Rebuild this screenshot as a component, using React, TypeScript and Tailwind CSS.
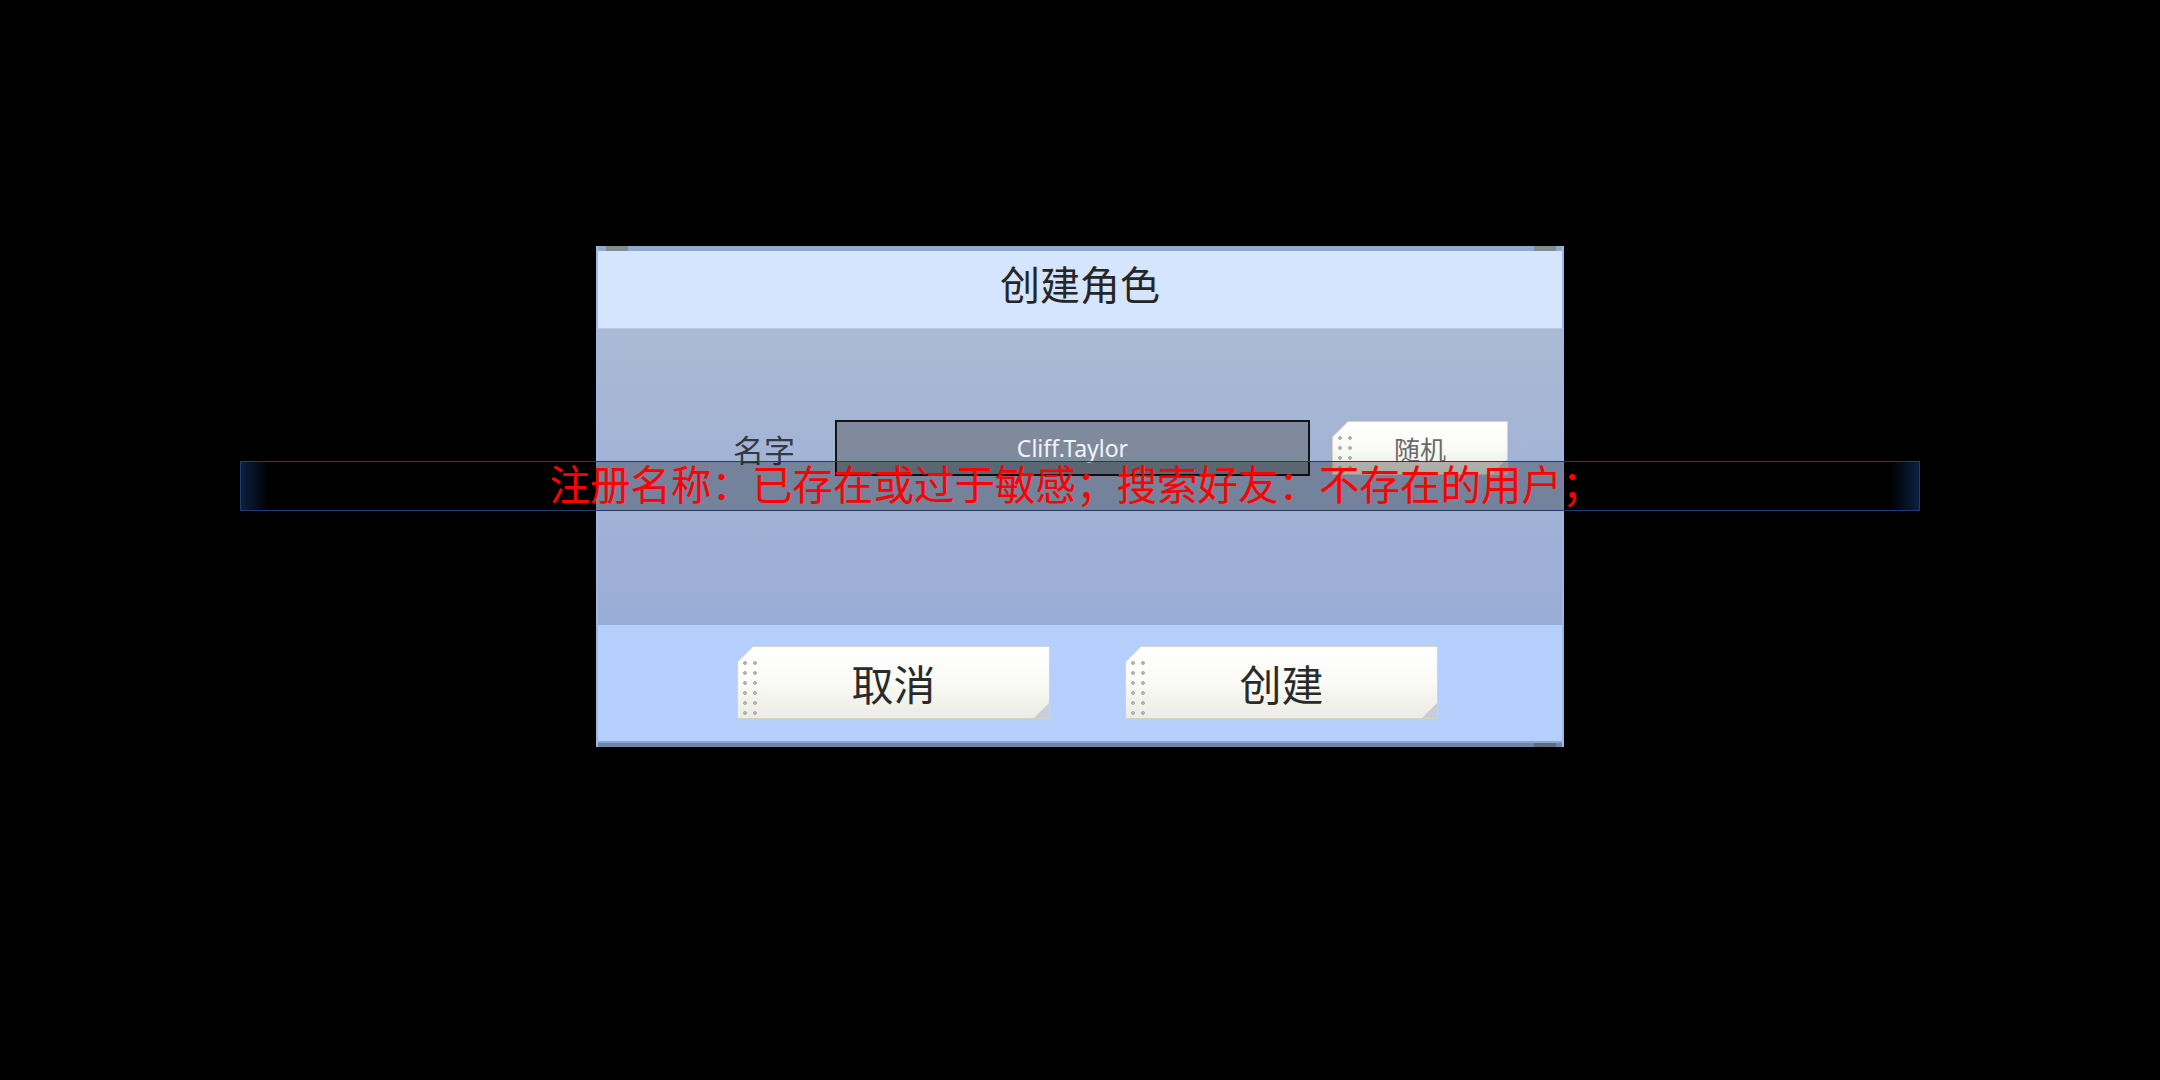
import React from 'react';

const CJK = '"Noto Sans CJK SC", "Noto Sans", sans-serif';

function PaperButton({ label, className, textClass }: { label: string; className: string; textClass: string }) {
  return (
    <div className={`relative ${className}`}>
      {/* frame */}
      <div className="absolute inset-0 bg-[#d6d3c4] [clip-path:polygon(16px_0,100%_0,100%_100%,0_100%,0_16px)]" />
      {/* face */}
      <div className="absolute inset-[1px] bg-gradient-to-b from-[#ffffff] via-[#fafaf6] to-[#ecece4] [clip-path:polygon(15px_0,100%_0,100%_100%,0_100%,0_15px)]" />
      {/* dotted strip */}
      <div className="absolute left-[3px] top-[12px] bottom-[3px] w-[20px] bg-[radial-gradient(circle,#b3b3ad_1.6px,transparent_2.2px)] bg-[length:10px_10px]" />
      {/* corner fold */}
      <div className="absolute right-[1px] bottom-[1px] w-[15px] h-[15px] bg-[#c9cdd9] [clip-path:polygon(100%_0,100%_100%,0_100%)]" />
      <span className={`relative flex h-full items-center justify-center ${textClass}`} style={{ fontFamily: CJK }}>
        {label}
      </span>
    </div>
  );
}

export default function App() {
  return (
    <div className="relative w-[2160px] h-[1080px] bg-black overflow-hidden">
      <div className="flex justify-center pt-[246px]">
        {/* dialog */}
        <div className="relative w-[968px] flex flex-col border-x-2 border-[#9db8e6]">
          {/* top rim */}
          <div className="relative h-[5px] bg-[#8ea9d2]">
            <div className="absolute left-[8px] top-0 w-[22px] h-[5px] bg-[#7d908e]" />
            <div className="absolute right-[6px] top-0 w-[22px] h-[5px] bg-[#7d908e]" />
          </div>

          {/* title */}
          <div className="h-[78px] bg-[#d5e5fd] flex items-center justify-center pb-[14px] border-b border-[#b9c8e0]">
            <span className="text-[40px] leading-none text-[#262626]" style={{ fontFamily: CJK }}>
              创建角色
            </span>
          </div>

          {/* body */}
          <div className="h-[296px] bg-gradient-to-b from-[#aab9d4] to-[#9aadd6] pt-[91px] pl-[135px]">
            <div className="flex items-center h-[56px]">
              <span className="text-[31px] leading-none text-[#333a44] w-[102px]" style={{ fontFamily: CJK }}>
                名字
              </span>
              <div className="w-[475px] h-[56px] border-2 border-[#141414] bg-[#7f8b9d] flex items-center justify-center">
                <span className="text-[23px] text-[#f2f4f8]" style={{ fontFamily: '"Noto Sans", sans-serif' }}>
                  Cliff.Taylor
                </span>
              </div>
              <PaperButton
                label="随机"
                className="ml-[22px] w-[176px] h-[54px]"
                textClass="text-[26px] text-[#6a6a6a]"
              />
            </div>
          </div>

          {/* footer */}
          <div className="h-[116px] bg-[#b5d0fc] flex pt-[21px] pl-[139px] gap-[75px]">
            <PaperButton label="取消" className="w-[313px] h-[73px]" textClass="text-[42px] text-[#2a2a2a]" />
            <PaperButton label="创建" className="w-[313px] h-[73px]" textClass="text-[42px] text-[#2a2a2a]" />
          </div>

          {/* bottom rim */}
          <div className="relative h-[6px] bg-[#7087ac] border-t-2 border-[#8fa6cc]">
            <div className="absolute right-[6px] bottom-0 w-[22px] h-[4px] bg-[#5f6e7c]" />
          </div>
        </div>
      </div>

      {/* toast overlay */}
      <div className="absolute left-[240px] top-[461px] w-[1680px] h-[50px] border border-[#1f3d70] bg-[rgba(0,0,0,0.27)] flex items-center justify-center">
        <div className="absolute left-0 top-0 bottom-0 w-[28px] bg-gradient-to-r from-[#0b2042] to-transparent" />
        <div className="absolute right-0 top-0 bottom-0 w-[28px] bg-gradient-to-l from-[#0b2042] to-transparent" />
        <span className="relative text-[40.5px] leading-none text-[#ff0000] ml-[-8px] mb-[5px]" style={{ fontFamily: CJK }}>
          注册名称：已存在或过于敏感；搜索好友：不存在的用户；
        </span>
      </div>
    </div>
  );
}
